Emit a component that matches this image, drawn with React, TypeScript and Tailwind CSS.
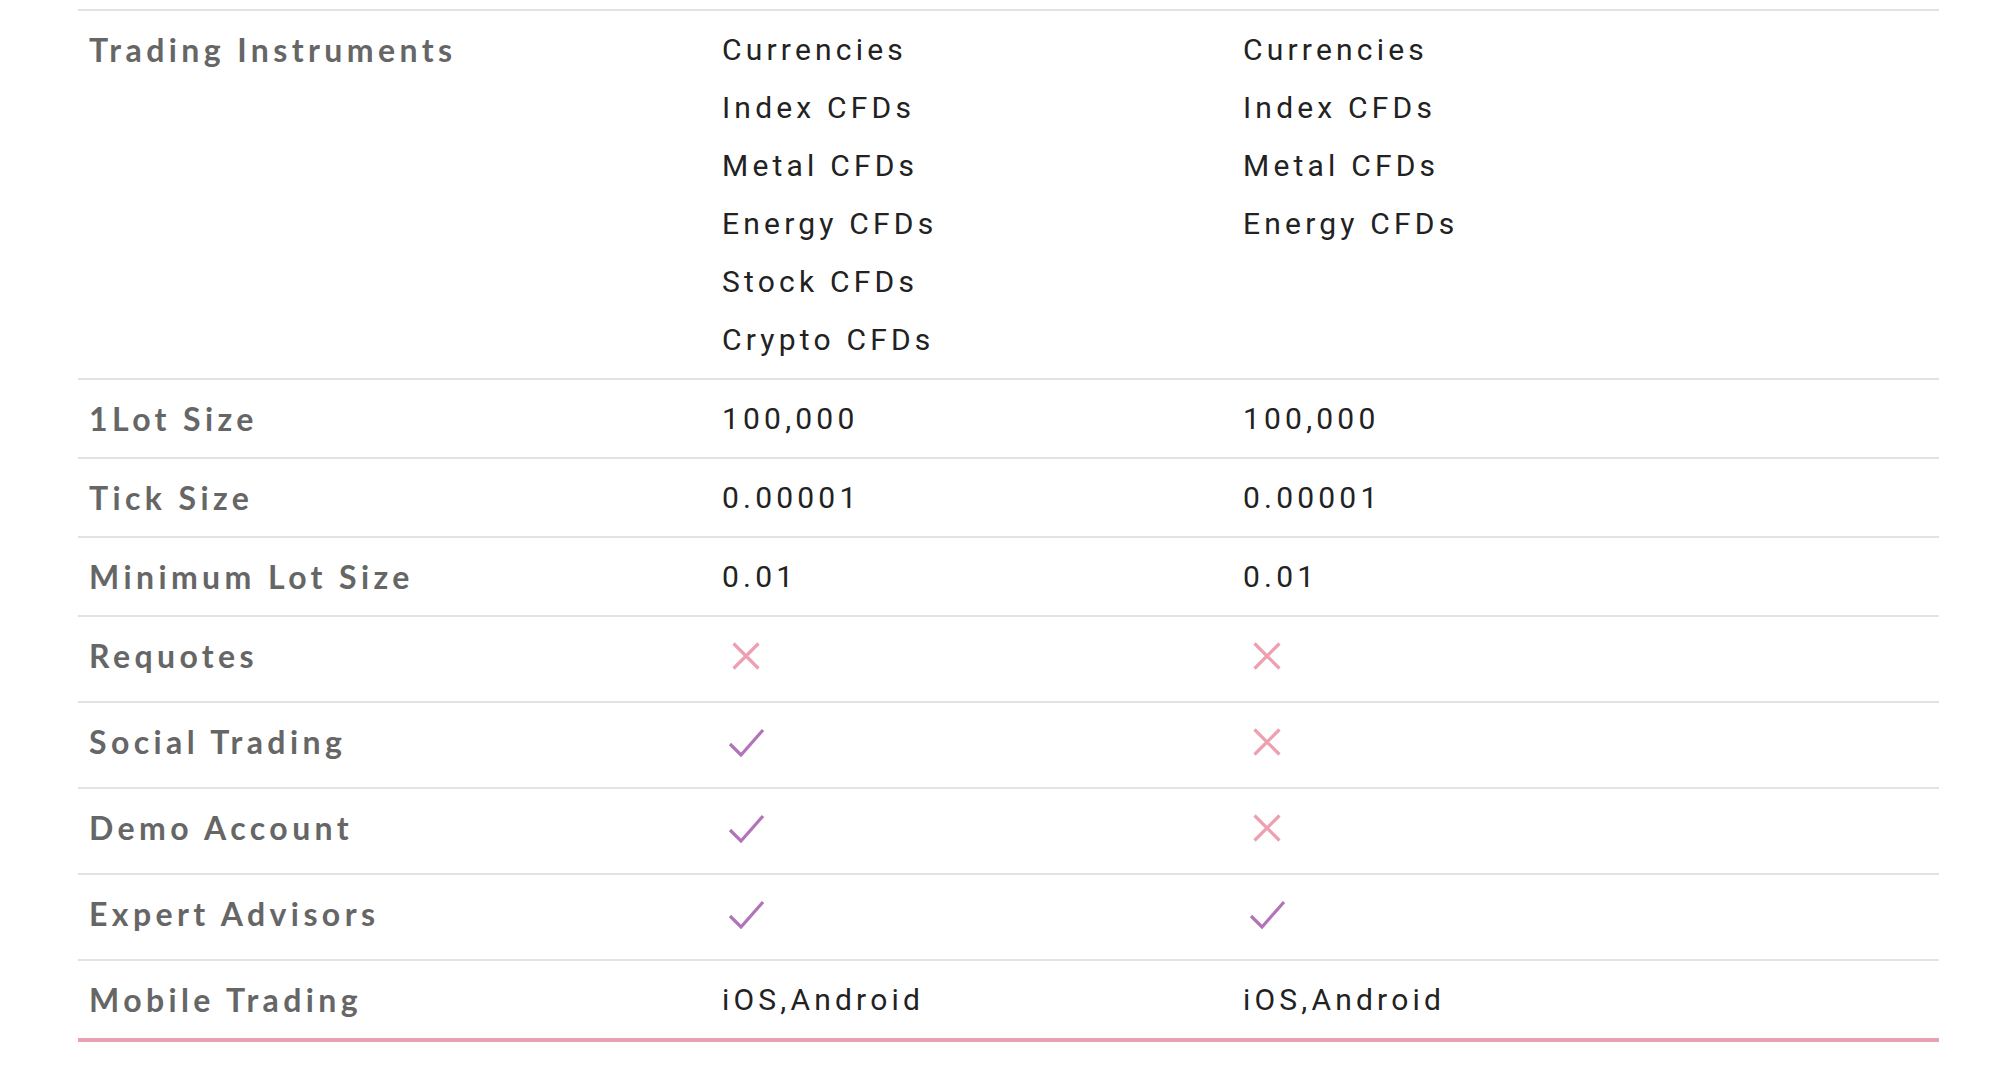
import React from "react";

type Cell = string[] | "yes" | "no" | string;

interface Row {
  label: string;
  a: Cell;
  b: Cell;
  icons?: boolean;
}

const ROWS: Row[] = [
  {
    label: "Trading Instruments",
    a: ["Currencies", "Index CFDs", "Metal CFDs", "Energy CFDs", "Stock CFDs", "Crypto CFDs"],
    b: ["Currencies", "Index CFDs", "Metal CFDs", "Energy CFDs"],
  },
  { label: "1Lot Size", a: "100,000", b: "100,000" },
  { label: "Tick Size", a: "0.00001", b: "0.00001" },
  { label: "Minimum Lot Size", a: "0.01", b: "0.01" },
  { label: "Requotes", a: "no", b: "no", icons: true },
  { label: "Social Trading", a: "yes", b: "no", icons: true },
  { label: "Demo Account", a: "yes", b: "no", icons: true },
  { label: "Expert Advisors", a: "yes", b: "yes", icons: true },
  { label: "Mobile Trading", a: "iOS,Android", b: "iOS,Android" },
];

const Cross = () => (
  <svg width="28" height="28" viewBox="0 0 28 28" className="ml-[10px]">
    <path d="M1.5 1.5 L26.5 26.5 M26.5 1.5 L1.5 26.5" stroke="#eca0b2" strokeWidth="3.2" fill="none" />
  </svg>
);

const Check = () => (
  <svg width="37" height="30" viewBox="0 0 37 30" className="ml-[6px]">
    <polyline points="2,17 13,28 35,3" stroke="#b274b8" strokeWidth="3.2" fill="none" />
  </svg>
);

function Value({ v }: { v: Cell }) {
  if (v === "yes") return <div className="flex h-[58px] items-center"><Check /></div>;
  if (v === "no") return <div className="flex h-[58px] items-center"><Cross /></div>;
  const lines = Array.isArray(v) ? v : [v];
  return (
    <div className="flex flex-col">
      {lines.map((l) => (
        <span key={l} className="h-[58px] leading-[58px]">{l}</span>
      ))}
    </div>
  );
}

export default function App() {
  return (
    <div className="min-h-[1084px] w-full bg-white pt-[9px]">
      <div className="ml-[78px] w-[1861px] border-t-2 border-b-4 border-t-[#e3e3e3] border-b-[#e8a1b1]">
        {ROWS.map((row, i) => (
          <div
            key={row.label}
            className={`grid grid-cols-[634px_521px_1fr] pt-[10px] ${
              row.icons ? "pb-[16px]" : "pb-[9px]"
            } ${i < ROWS.length - 1 ? "border-b-2 border-[#e3e3e3]" : ""}`}
          >
            <div className="h-[58px] pl-[11px] font-['Lato',sans-serif] text-[32px] font-bold leading-[57px] tracking-[4.4px] text-[#666666]">
              {row.label}
            </div>
            <div className="pl-[10px] font-['Roboto',sans-serif] text-[30px] tracking-[4.2px] text-[#222222]">
              <Value v={row.a} />
            </div>
            <div className="pl-[10px] font-['Roboto',sans-serif] text-[30px] tracking-[4.2px] text-[#222222]">
              <Value v={row.b} />
            </div>
          </div>
        ))}
      </div>
    </div>
  );
}
